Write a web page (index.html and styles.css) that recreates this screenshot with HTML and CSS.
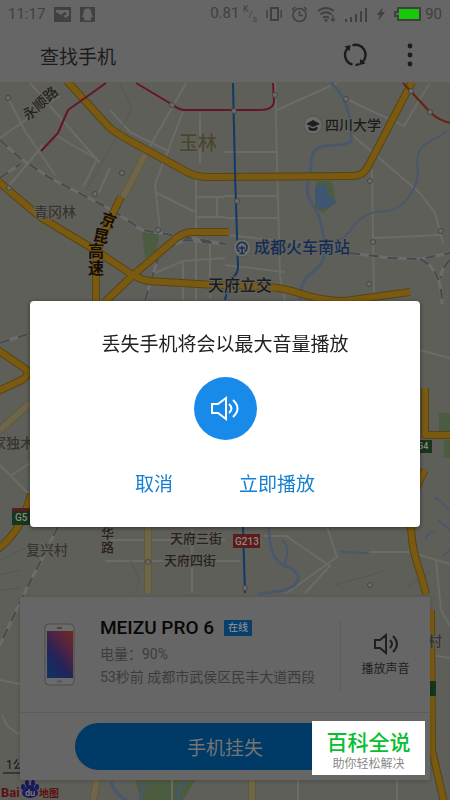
FILE: index.html
```
<!DOCTYPE html>
<html lang="zh-CN">
<head>
<meta charset="UTF-8">
<meta name="viewport" content="width=device-width, initial-scale=1">
<title>查找手机</title>
<link rel="stylesheet" href="styles.css">
</head>
<body>
<div class="page">
	<div class="status">
		<span>11:17</span>
		<svg class="note" width="17" height="15" viewBox="0 0 17 15"><path fill="#404040" d="M0 0h17v15H0z"/><path fill="#666" d="M2 3h13v6l-3 1 3 3-6-4 4-2-2-2-4 3-5-3z"/></svg>
		<svg class="note" width="15" height="15" viewBox="0 0 15 15"><path fill="#404040" d="M0 0h15v15H0z"/><path fill="#666" d="M7.500 1.500c-3 0-4 2-4 5l-1.500 4 1.500-.5 1 2-1 1.500h8l-1-1.500 1-2 1.500.5-1.500-4c0-3-1-5-4-5z"/></svg>
		<span class="speed">0.81 <sup>K</sup><small>/</small><sub>s</sub></span>
		<svg width="16" height="16" viewBox="0 0 16 16" fill="none" stroke="#404040"><path stroke-width="2" d="M5 2h7v12H5z"/><path stroke-width="1.500" d="M1 4v8M15.300 4v8"/></svg>
		<svg width="17" height="17" viewBox="0 0 17 17" fill="none" stroke="#404040" stroke-width="1.500"><circle cx="8.500" cy="9" r="6.500"/><path d="M8.500 5v4.500H12M1 4l3-3M16 4l-3-3"/></svg>
		<svg width="19" height="16" viewBox="0 0 19 16" fill="none" stroke="#404040" stroke-width="1.800"><path d="M1 5q8-6 16 0M3.500 8.500q5.500-4.500 11 0M6 12q3-2.500 6 0"/><circle cx="9" cy="14.200" r=".6"/><path stroke-width="1.300" d="M16 9v6M14 13l2 2 2-2"/></svg>
		<svg width="23" height="15" viewBox="0 0 23 15" fill="#404040"><path d="M0 12h2v3H0zM5 10h2v5H5zM10 7h2v8h-2zM15 4h2v11h-2zM20 1h2v14h-2z"/></svg>
		<svg width="8" height="14" viewBox="0 0 8 14" fill="#404040"><path d="M6 0L0 8h3l-2 6 7-9H4.500z"/></svg>
		<svg width="27" height="14" viewBox="0 0 27 14"><path fill="none" stroke="#404040" stroke-width="2" d="M4 1h22v12H4V9H1V5h3z"/><path fill="#18c80a" d="M5 2h20v10H5z"/></svg>
		<span class="level">90</span>
	</div>

	<header class="bar">
		<h1>查找手机</h1>
		<button class="icon-btn" type="button" aria-label="刷新">
			<svg width="24" height="24" viewBox="0 0 24 24"><path fill="none" stroke="#1c1c1c" stroke-width="2.400" d="M9.500 21.700A10 10 0 0 1 5 5M9.500 2.300A10 10 0 0 1 19.500 19M12.500 22q2 0 4-1"/><path fill="#1c1c1c" d="M1.500 3.500L7.500 2l-.7 6zM22.500 20.500l-6 1.500.7-6z"/></svg>
		</button>
		<button class="icon-btn" type="button" aria-label="更多">
			<svg width="6" height="24" viewBox="0 0 6 24" fill="#1c1c1c"><circle cx="3" cy="3" r="2.400"/><circle cx="3" cy="12" r="2.400"/><circle cx="3" cy="21" r="2.400"/></svg>
		</button>
	</header>

	<main class="content">
		<svg class="map" viewBox="0 82 450 718" preserveAspectRatio="xMidYMid slice">
			<path class="ground" d="M0 82h450v718H0z"/>
			<!-- parks -->
			<path class="park" d="M142 231l17 3-2 17-12 7zM316 181h16l4 22-13 10-8-6zM439 413h11v20h-11zM444 440h10v18h-10zM135 780h60l-12 20h-42z"/>
			<!-- streets -->
			<g class="street">
				<path d="M8 98l17 33 30 44M0 138l60-42M30 83l70 80M55 135l42 24M97 159l-14 28M110 168l-12 26M186 83l-41 72M110 110l20 22 40 20M183 112l-28 72 5 47M155 192l40 20M196 176v125M200 113v50M275 83l5 193 5 25M225 152h52M225 196h54M225 218h54M197 197h28M197 217h28M217 197v20M183 262v38M210 243v55M155 273l28-12 42-3M225 235l80 8M225 265l60 7M277 110l60-27M346 99l58 27 25-42M350 133l70 60 15 20 8 30M372 170l2 130M374 238l68-3M8 187l35-42M400 345l50 13M0 465l30 30M12 475l18-12"/>
				<path d="M105 540h120M105 561h135M192 527v66M264 536h22l44 30-25 27M327 527l10 30-50 36M370 552h40l40 12M436 560l5 50 9 16M0 680l20 4M2 715q5 15 18 19M397 780v20M172 780v20M298 780v20M430 655l20 3"/>
			</g>
			<path class="faint" d="M120 84l12 25-45 80M0 575l20-5M0 590l20-2M0 560l30-14M130 560l10 20-5 13M335 585l50-14M408 586l22-14"/>
			<!-- rivers -->
			<path class="river" d="M331 83q22 20 20 58c-12 10-39-5-40 22-1 25-10 26 4 45 6 10 9 30 10 44-4 25-24 15-25 48M269 527c0 20 3 36 20 40 20 12 4 22-10 24l-20 3"/>
			<path class="river thin" d="M447 131c-10 10-28 8-30 30 5 30-15 48-30 50-40 0-30 30-60 33M282 540c12 10 0 22 4 28M340 552l28 1M434 498c8 0 8 8 16 12M425 540q4-10 10-8M438 520l12 10M442 556l8-6"/>
			<path class="river" d="M111 782q5 14 16 18M145 782l-5 18M185 782q-10 6-5 18"/>
			<path class="lake" d="M315 187l10-3 4 12 7 5-6 6-10 2-5-8z"/>
			<!-- railways -->
			<path class="rail" d="M0 140l20 18 30 20 62 32 30 20 83 14M0 178l20-14M145 300l15-48 25-12 40 4M350 253l40 5 30 1 30-6M420 259q22 10 22 45M450 260q-10 10-9 18M0 343l28-9M58 527L25 592 0 645"/>
			<path class="rail-dash" d="M0 140l20 18 30 20 62 32 30 20 83 14M0 178l20-14M145 300l15-48 25-12 40 4M350 253l40 5 30 1 30-6M420 259q22 10 22 45M450 260q-10 10-9 18M0 343l28-9M58 527L25 592 0 645"/>
			<!-- pale roads -->
			<path class="pale-edge" d="M145 155l-22 42M148 527v66M0 430l30-27M97 780l-4 20M252 780v20"/>
			<path class="pale" d="M145 155l-22 42M148 527v66M0 430l30-27M97 780l-4 20M252 780v20"/>
			<!-- highways -->
			<path class="hw-edge" d="M67 81l41 45q5 6 37 23l42 23q9 5 22 5l144-1c10 0 13-5 20-19l39-75M-2 181l42 36 55 33 33 22q8 6 20 9l67 4 42 1q25 1 45 8t43 7l65-9M105 302l26-25 42-36q8-8 18-9h38M121 197l-8 16q-17 35-17 52v37M-2 350l26 18q8 5-2 12l-24 11M31 494q-9 37-33 55M425 388v47h27M425 470q-15 25-14 57c1 30 9 40 15 67M431 610l1 140 12 52"/>
			<path class="hw" d="M67 81l41 45q5 6 37 23l42 23q9 5 22 5l144-1c10 0 13-5 20-19l39-75M-2 181l42 36 55 33 33 22q8 6 20 9l67 4 42 1q25 1 45 8t43 7l65-9M105 302l26-25 42-36q8-8 18-9h38M121 197l-8 16q-17 35-17 52v37M-2 350l26 18q8 5-2 12l-24 11M31 494q-9 37-33 55M425 388v47h27M425 470q-15 25-14 57c1 30 9 40 15 67M431 610l1 140 12 52"/>
			<!-- metro lines -->
			<path class="metro red" d="M106 83l-38 27-10 23-17 18M136 83l37 22q6 5 12 5h74q15 0 15-9l-1-18"/>
			<path class="metro orange" d="M403 83l27 29q8 8 20 11"/>
			<path class="metro blue" d="M233 83l2 90 3 94q0 8-8 12l-5 21M243 527l2 66"/>
			<g class="stop">
				<circle cx="8" cy="98" r="2.500"/><circle cx="172" cy="105" r="2.500"/><circle cx="122" cy="173" r="2.500"/><circle cx="9" cy="188" r="2.500"/><circle cx="95" cy="194" r="2.500"/><circle cx="158" cy="230" r="2.500"/><circle cx="234" cy="111" r="2.500"/><circle cx="275" cy="95" r="2.500"/><circle cx="237" cy="201" r="2.500"/><circle cx="346" cy="99" r="2.500"/><circle cx="411" cy="91" r="2.500"/><circle cx="430" cy="112" r="2.500"/><circle cx="370" cy="181" r="2.500"/><circle cx="441" cy="231" r="2.500"/><circle cx="373" cy="242" r="2.500"/><circle cx="369" cy="284" r="2.500"/><circle cx="148" cy="562" r="2.500"/><circle cx="245" cy="588" r="2.500"/><circle cx="370" cy="585" r="2.500"/>
			</g>
			<!-- places -->
			<circle class="poi" cx="313" cy="125" r="9"/>
			<path fill="#1b1f22" d="M306 124l7-4 7 4-7 3zM308.500 126.500l4.500 2 4.500-2v3q-4.500 3-9 0z"/>
			<circle class="poi" cx="242" cy="248" r="9"/>
			<path fill="none" stroke="#142c55" stroke-width="1.500" d="M239.500 251.500a5 5 0 1 1 5 0M239 248h6M242 246v7M239.500 253.500h5"/>
			<g class="label">
				<text class="road-name" transform="translate(28 121) rotate(-42)" font-size="14">永顺路</text>
				<text class="district" x="179" y="150" font-size="19">玉林</text>
				<text class="village" x="34" y="217" font-size="14">青冈林</text>
				<text class="dark" x="325" y="130" font-size="14">四川大学</text>
				<text class="station" x="254" y="253" font-size="16">成都火车南站</text>
				<text class="dark" x="208" y="291" font-size="16">天府立交</text>
				<text class="expressway" transform="translate(99 223) rotate(20)" font-size="16">京</text>
				<text class="expressway" transform="translate(92 240) rotate(12)" font-size="16">昆</text>
				<text class="expressway" x="88" y="257" font-size="16">高</text>
				<text class="expressway" x="88" y="274" font-size="16">速</text>
				<text class="village" x="-8" y="448" font-size="14">家独木</text>
				<text class="village" x="26" y="555" font-size="14">复兴村</text>
				<text class="road-name" x="101" y="538" font-size="13">华</text>
				<text class="road-name" x="101" y="552" font-size="13">路</text>
				<text class="road-name" x="170" y="543" font-size="13">天府三街</text>
				<text class="road-name" x="164" y="565" font-size="13">天府四街</text>
				<text class="village" x="428" y="646" font-size="14">村</text>
			</g>
			<path fill="#16361f" d="M12 508h20v17H12zM415 440h17v13h-17zM428 681h8v15h-8z"/>
			<path fill="#5c1c1c" d="M12 508h20v3H12zM233 534h27v14h-27z"/>
			<g class="shield">
				<text x="15" y="521" font-size="10">G5</text>
				<text x="417" y="449" font-size="9">G4</text>
				<text x="235" y="545" font-size="10">G213</text>
			</g>
			<!-- scale and Baidu logo -->
			<text class="scale" x="6" y="769" font-size="12">1公里</text>
			<path stroke="#111" d="M3 773h30"/>
			<text class="baidu" x="1" y="797" font-size="13">Bai</text>
			<text class="baidu" x="39" y="797" font-size="10">地图</text>
			<g fill="#171a5c"><ellipse cx="30" cy="793" rx="8" ry="5"/><ellipse cx="30" cy="789" rx="5" ry="4"/><ellipse cx="23" cy="787" rx="2" ry="3"/><ellipse cx="27" cy="783" rx="2" ry="3"/><ellipse cx="33" cy="783" rx="2" ry="3"/><ellipse cx="37" cy="787" rx="2" ry="3"/></g>
			<text class="du" x="25" y="796" font-size="9">du</text>
		</svg>

		<section class="card">
			<div class="device">
				<svg class="phone" width="32" height="64" viewBox="0 0 32 64">
					<defs><linearGradient id="screen" x1="1" y1="0" x2=".3" y2="1"><stop offset="0" stop-color="#6d2b20"/><stop offset=".35" stop-color="#542440"/><stop offset=".7" stop-color="#22245a"/><stop offset="1" stop-color="#123060"/></linearGradient></defs>
					<rect x="1" y="1" width="29" height="61" rx="4" fill="#6b6b6b" stroke="#504a48"/>
					<path fill="url(#screen)" d="M3 8h26v47H3z"/>
					<path stroke="#222" d="M13 5h5"/><rect x="13" y="57.500" width="5" height="2" rx="1" fill="#555"/>
				</svg>
				<div class="info">
					<h2>MEIZU PRO 6 <span class="tag">在线</span></h2>
					<p>电量：90%</p>
					<p>53秒前 成都市武侯区民丰大道西段</p>
				</div>
				<button class="sound" type="button">
					<svg width="26" height="22" viewBox="0 0 26 22" fill="none" stroke="#202020" stroke-width="2"><path d="M2 7h5l6-5v18l-6-5H2zM17 7q4 4 0 8M20 3q8 8 0 16"/></svg>
					<span>播放声音</span>
				</button>
			</div>
			<div class="action">
				<button class="lost" type="button">手机挂失</button>
			</div>
		</section>
	</main>
</div>

<div class="overlay">
	<div class="dialog" role="dialog" aria-labelledby="dialog-title">
		<h2 id="dialog-title">丢失手机将会以最大音量播放</h2>
		<div class="speaker">
			<svg width="30" height="26" viewBox="0 0 30 26" fill="none" stroke="#fff" stroke-width="2"><path d="M2 8h6l8-6v21l-8-6H2zM19 8q5 4.500 0 9M23 4q9 8.500 0 17"/></svg>
		</div>
		<div class="buttons">
			<button type="button">取消</button>
			<button type="button">立即播放</button>
		</div>
	</div>
</div>

<div class="badge">
	<strong>百科全说</strong>
	<span>助你轻松解决</span>
</div>
</body>
</html>
```
FILE: styles.css
```
* {margin:0; padding:0; box-sizing:border-box;}
body {font-family:Roboto, "Noto Sans CJK SC", sans-serif; background:#666; color:#202020;}
button {border:0; background:none; font-family:inherit; color:inherit; cursor:pointer;}
svg {display:block; flex:none;}
.page {display:flex; flex-direction:column; min-height:100vh;}

/* top */
.status {display:flex; align-items:center; gap:9px; height:28px; padding:0 8px; font-size:15px; color:#404040; white-space:nowrap;}
.speed {margin-left:auto;}
.speed sup, .speed sub, .speed small {font-size:9px; line-height:1;}
.level {margin-left:-5px;}
.bar {display:flex; align-items:center; gap:39px; height:54px; padding:0 36px 0 40px;}
.bar h1 {flex:1; font-size:19px; font-weight:400; color:#1c1c1c;}
.icon-btn {display:flex; justify-content:center; min-width:8px;}

/* map */
.content {position:relative; flex:1; display:flex; flex-direction:column; justify-content:flex-end; padding:20px; overflow:hidden;}
.map {position:absolute; top:0; left:0; width:100%; height:100%;}
.map path {stroke-linejoin:round;}
.ground {fill:#5f5f5a;}
.park {fill:#4c5c40;}
.lake {fill:#3f5672;}
.street path {fill:none; stroke:#6b6b67; stroke-width:2;}
.faint {fill:none; stroke:#555753;}
.river {fill:none; stroke:#4a586c; stroke-width:3;}
.thin {stroke-width:2;}
.rail {fill:none; stroke:#6c6c6c; stroke-width:3;}
.rail-dash {fill:none; stroke:#48494b; stroke-width:2; stroke-dasharray:10 9;}
.pale-edge {fill:none; stroke:#625938; stroke-width:8;}
.pale {fill:none; stroke:#6e664a; stroke-width:6;}
.hw-edge {fill:none; stroke:#584414; stroke-width:8;}
.hw {fill:none; stroke:#795a10; stroke-width:6;}
.metro {fill:none; stroke-width:2;}
.red {stroke:#66142c;}
.orange {stroke:#642413;}
.blue {stroke:#103a66;}
.stop {fill:#6c6c6c; stroke:#454545;}
.poi {fill:#6c6c6a; stroke:#555;}
.label {font-family:"Noto Sans CJK SC", sans-serif; font-weight:500;}
.label text {paint-order:stroke; stroke:#62625d; stroke-width:2px;}
.road-name {fill:#29211c;}
.district {fill:#4b4630;}
.village {fill:#38342f;}
.dark {fill:#1b1b1b;}
.station {fill:#142c55;}
.label .expressway {fill:#160e08; stroke:none; font-weight:700;}
.shield {fill:#8a8a80; font-weight:500;}
.scale {fill:#111;}
.baidu {fill:#5e1010; font-weight:700;}
.du {fill:#777; font-weight:700;}

/* device card */
.card {position:relative; background:#666; border-radius:2px; box-shadow:0 1px 4px rgba(0,0,0,.2);}
.device {display:flex; align-items:center; height:116px; padding-left:24px; border-bottom:1px solid #5c5c5c;}
.info {flex:1; padding:0 0 5px 24px; white-space:nowrap;}
.info h2 {display:flex; align-items:center; gap:10px; font-size:19px; line-height:24px; font-weight:500; color:#080808; margin-bottom:3px;}
.tag {padding:0 4px; border-radius:1px; background:#063e6c; color:#8a8a8a; font-size:10px; line-height:16px;}
.info p {font-size:14px; line-height:23px; color:#3c3c3c;}
.sound {display:flex; flex-direction:column; align-items:center; justify-content:center; gap:4px; width:90px; height:72px; border-left:1px solid #5c5c5c; font-size:12px; color:#202020;}
.action {padding:10px 55px;}
.lost {display:block; width:100%; height:47px; border-radius:24px; background:#003a66; color:#747474; font-size:19px;}

/* dialog */
.overlay {position:fixed; top:0; right:0; bottom:0; left:0; display:flex; align-items:center; padding:28px 30px 0;}
.dialog {flex:1; display:flex; flex-direction:column; align-items:center; padding:30px 20px 28px; background:#fff; border-radius:4px; box-shadow:0 1px 4px rgba(0,0,0,.5);}
.dialog h2 {font-size:19px; line-height:28px; font-weight:400; color:#222;}
.speaker {display:flex; align-items:center; justify-content:center; width:63px; height:63px; margin:18px 0 31px; border-radius:50%; background:#188bea;}
.buttons {display:flex; gap:66px;}
.buttons button {font-size:19px; line-height:28px; color:#1680d0;}

.badge {position:absolute; right:25px; bottom:25px; width:113px; padding:9px 0 3px; background:#fff; text-align:center;}
.badge strong {display:block; font-size:21px; line-height:26px; font-weight:500; color:#08be32;}
.badge span {display:block; font-size:12px; line-height:16px; color:#888;}
```
